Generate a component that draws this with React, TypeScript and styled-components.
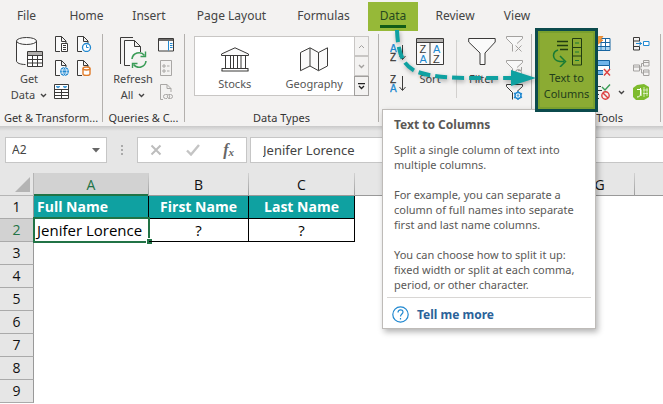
import React from "react";
import styled, { createGlobalStyle, css } from "styled-components";

const uiFont = `"Noto Sans", "Open Sans", sans-serif`;
const sheetFont = `"Open Sans", "Noto Sans", sans-serif`;
const ink = "#3b3a39";
const blue = "#2088d0";
const teal = "#0fa1a1";
const green = "#217346";

const Global = createGlobalStyle`
  *, *::before, *::after { box-sizing: border-box; }
  body { margin: 0; background: #fff; overflow: hidden; }
  button, input { font: inherit; color: inherit; }
  svg { display: block; flex: none; }
`;

const Page = styled.div`
  position: relative;
  min-height: 100vh;
  overflow: hidden;
  font: 12px/16px ${uiFont};
  color: #444;
  background: #fff;
`;

/* ---------- Ribbon ---------- */

const Ribbon = styled.header`
  background: #f3f2f1;
  padding-top: 2px;
`;

const Tabs = styled.nav`
  display: flex;
  margin-bottom: 3px;
`;

const Tab = styled.button<{ $w: number; $active?: boolean }>`
  flex: none;
  width: ${(p) => p.$w}px;
  height: 29px;
  padding: 0 0 2px;
  border: 0;
  background: none;
  white-space: nowrap;
  ${(p) =>
    p.$active &&
    css`
      margin-left: 6px;
      color: #26491f;
      background: #96b938;
      span {
        display: inline-block;
        height: 24px;
        padding-top: 4px;
        border-bottom: 3px solid #135c17;
      }
    `}
`;

const Groups = styled.div`
  display: flex;
  height: 92px;
`;

const Separator = styled.i<{ $short?: boolean }>`
  flex: none;
  width: 1px;
  height: ${(p) => (p.$short ? 58 : 88)}px;
  margin: ${(p) => (p.$short ? "6px 1px 0 3px" : 0)};
  background: ${(p) => (p.$short ? "#d2d0ce" : "#b3b0ad")};
`;

const Group = styled.section<{ $w: number }>`
  flex: none;
  width: ${(p) => p.$w}px;
  display: flex;
  flex-direction: column;
`;

const Tools = styled.div<{ $pad: number }>`
  display: flex;
  height: 76px;
  padding-left: ${(p) => p.$pad}px;
`;

const GroupLabel = styled.h2`
  margin: 0;
  font-size: 11px;
  font-weight: 400;
  line-height: 16px;
  text-align: center;
  white-space: nowrap;
  color: #333;
`;

const BigButton = styled.button<{ $w: number }>`
  flex: none;
  width: ${(p) => p.$w}px;
  display: flex;
  flex-direction: column;
  align-items: center;
  padding: 3px 0 0;
  border: 0;
  background: none;
  font-size: 11px;
  white-space: nowrap;
  svg.art {
    margin-bottom: 3px;
  }
`;

const WithChevron = styled.span`
  display: flex;
  align-items: center;
  gap: 5px;
`;

const IconGrid = styled.div<{ $cols?: number; $gap?: number; $left?: number }>`
  display: grid;
  grid-template-columns: repeat(${(p) => p.$cols || 1}, max-content);
  align-content: start;
  gap: 8px ${(p) => p.$gap || 0}px;
  padding-top: 2px;
  margin-left: ${(p) => p.$left || 0}px;
`;

const IconButton = styled.button`
  display: flex;
  align-items: center;
  gap: 6px;
  height: 16px;
  padding: 0;
  border: 0;
  background: none;
`;

const SortColumn = styled.div`
  display: flex;
  flex-direction: column;
  gap: 15px;
  width: 17px;
  padding-top: 11px;
`;

const Gallery = styled.div`
  display: flex;
  width: 175px;
  height: 60px;
  margin-top: 2px;
  border: 1px solid #c8c6c4;
  background: #fff;
`;

const GalleryItem = styled.button`
  flex: 1;
  display: flex;
  flex-direction: column;
  align-items: center;
  justify-content: flex-end;
  gap: 4px;
  padding: 0 0 3px;
  border: 0;
  background: none;
  font-size: 11px;
  color: #555;
`;

const GalleryScroll = styled.div`
  display: flex;
  flex-direction: column;
  width: 15px;
  margin: -1px -1px -1px 0;
`;

const ScrollButton = styled.button<{ $strong?: boolean }>`
  flex: 1;
  display: flex;
  align-items: center;
  justify-content: center;
  padding: 0;
  border: 1px solid ${(p) => (p.$strong ? "#a19f9d" : "#c8c6c4")};
  background: #f3f2f1;
`;

const HighlightButton = styled(BigButton)`
  position: relative;
  z-index: 3;
  height: 84px;
  margin-top: -6px;
  padding-top: 6px;
  border: 3px solid #0b4a4c;
  background: #8bab33;
  box-shadow: inset 0 0 0 2px #79a02e;
  color: #1f3d1b;
`;

/* ---------- Formula bar ---------- */

const FormulaBar = styled.div`
  display: flex;
  height: 47px;
  padding: 11px 0 10px 5px;
  background: linear-gradient(#c9c9c9, #e6e6e6 5px);
`;

const field = css`
  height: 26px;
  border: 1px solid #c6c6c6;
  background: #fff;
`;

const NameBox = styled.label`
  ${field}
  flex: none;
  display: flex;
  align-items: center;
  width: 102px;
  padding: 0 6px;
  input {
    flex: 1;
    min-width: 0;
    padding: 0;
    border: 0;
    outline: 0;
    background: none;
  }
`;

const Dots = styled.span`
  flex: none;
  display: flex;
  justify-content: center;
  align-items: center;
  width: 30px;
`;

const EntryButtons = styled.div`
  ${field}
  flex: none;
  display: flex;
  align-items: center;
  justify-content: space-between;
  width: 110px;
  padding: 0 12px;
  button {
    padding: 0;
    border: 0;
    background: none;
  }
`;

const FunctionButton = styled.button`
  font: italic 700 16px/16px "Liberation Serif", serif;
  color: #666;
  sub {
    font-size: 11px;
    line-height: 0;
    vertical-align: -1px;
  }
`;

const FormulaInput = styled.input`
  ${field}
  flex: 1;
  min-width: 0;
  margin-left: 3px;
  padding: 0 12px;
  border-right: 0;
  outline: 0;
  && {
    font-size: 13px;
  }
`;

/* ---------- Sheet ---------- */

const Sheet = styled.table`
  width: 100%;
  table-layout: fixed;
  border-spacing: 0;
  font: 14px/20px ${sheetFont};
  color: #000;
  th,
  td {
    height: 23px;
    padding: 0;
    white-space: nowrap;
    text-align: center;
    font-weight: 400;
  }
`;

const Col = styled.col<{ $w?: number }>`
  width: ${(p) => (p.$w ? p.$w + "px" : "auto")};
`;

const ColHead = styled.th<{ $on?: boolean }>`
  color: ${(p) => (p.$on ? green : "#111")};
  background: ${(p) => (p.$on ? "#d2d2d2" : "#e6e6e6")};
  border-right: 1px solid;
  border-image: linear-gradient(#d4d4d4, #999) 1;
  box-shadow: inset 0 ${(p) => (p.$on ? "-2px " + green : "-1px #999")};
  &:last-child {
    border-right: 0;
  }
`;

const Corner = styled.th`
  background: #e6e6e6;
  border-right: 1px solid #b5b5b5;
  border-bottom: 1px solid #b5b5b5;
  svg {
    margin: 1px 2px 0 auto;
  }
`;

const RowHead = styled.th<{ $on?: boolean }>`
  color: ${(p) => (p.$on ? green : "#111")};
  background: ${(p) => (p.$on ? "#d2d2d2" : "#e6e6e6")};
  border-right: 1px solid #999;
  border-bottom: 1px solid #aaa;
`;

const TitleCell = styled.td<{ $left?: boolean }>`
  color: #fff;
  background: ${teal};
  border-right: 1px solid #000;
  border-bottom: 1px solid #000;
  && {
    font-weight: 700;
    ${(p) => p.$left && "text-align: left; padding-left: 3px;"}
  }
`;

const DataCell = styled.td<{ $left?: boolean }>`
  position: relative;
  border-right: 1px solid #000;
  border-bottom: 1px solid #000;
  && {
    font-size: 15px;
    ${(p) => p.$left && "text-align: left; padding-left: 3px;"}
  }
`;

const Selection = styled.span`
  position: absolute;
  inset: -2px -2px -2px -1px;
  border: 2px solid ${green};
  &::after {
    content: "";
    position: absolute;
    right: -4px;
    bottom: -3px;
    width: 6px;
    height: 6px;
    border: solid #fff;
    border-width: 1px 0 0 1px;
    background: ${green};
  }
`;

/* ---------- Tooltip and pointer ---------- */

const Tooltip = styled.aside`
  position: absolute;
  z-index: 2;
  left: 382px;
  top: 109px;
  width: 214px;
  padding: 7px 4px 0;
  border: 1px solid #bebbb8;
  background: #fff;
  box-shadow: 2px 3px 6px rgba(0, 0, 0, 0.3);
  color: #5a5856;
  font-size: 11px;
  line-height: 15px;
  h3 {
    margin: 0 7px 10px;
    font-size: 12px;
    line-height: 15px;
  }
  p {
    margin: 0 0 15px 7px;
    white-space: nowrap;
  }
  p:last-of-type {
    margin-bottom: 5px;
  }
`;

const More = styled.a`
  display: flex;
  align-items: center;
  gap: 8px;
  padding: 8px 5px 5px;
  border-top: 1px solid #d8d6d4;
  color: #2b6299;
  font-size: 12px;
  font-weight: 700;
  text-decoration: none;
`;

const Pointer = styled.svg`
  position: absolute;
  z-index: 4;
  left: 380px;
  top: 22px;
  pointer-events: none;
  filter: drop-shadow(1px 2px 2px rgba(0, 0, 0, 0.3));
`;

/* ---------- Icons ---------- */

type ArtProps = { w?: number; h?: number; children: React.ReactNode; art?: boolean; c?: string };

const Art = ({ w = 16, h = 16, children, art, c = ink }: ArtProps) => (
  <svg className={art ? "art" : undefined} width={w} height={h} viewBox={`0 0 ${w} ${h}`} fill="none" stroke={c} aria-hidden="true">
    {children}
  </svg>
);

const Chevron = ({ c = "#444" }: { c?: string }) => (
  <Art w={7} h={5} c={c}><path d="M1 1l2.500 2.500L6 1" strokeWidth="1.400" /></Art>
);

const Doc = () => (
  <path d="M6 15.500H1.500V.5H7.500L12 5v2M7.500.5V5.500H12" fill="#fafafa" />
);

const GetDataIcon = () => (
  <Art w={28} h={31} art>
    <path d="M1 4v20c0 2 4 4 10 4l11-8V4" fill="#fafafa" stroke="none" />
    <path d="M1.500 4v20c0 2 4 3.500 9 3.500M21.500 4v10" />
    <ellipse cx="11.500" cy="4" rx="10" ry="3.500" fill="#fafafa" />
    <path d="M12.500 14.500h15v15h-15z" fill="#fff" />
    <path d="M13 15h14v3H13z" fill="#b1afad" stroke="none" />
    <path d="M12.500 18.500h15M12.500 22.500h15M12.500 26h15M17.500 18v11M22.500 18v11" />
  </Art>
);

const RefreshIcon = () => (
  <Art w={28} h={31} art>
    <path d="M1.500 27V.5H14" />
    <path d="M11 28.500H5.500V3.500H15.500L21.500 9.500V15M15.500 3.500V9.500h6" fill="#fafafa" />
    <circle cx="20" cy="23" r="8" fill="#f3f2f1" stroke="none" />
    <path d="M13 22a7 7 0 0 1 12.500-3.500M27 24a7 7 0 0 1-12.500 3.500" stroke="#3a9c57" strokeWidth="1.600" />
    <path d="M26.500 14.500v5h-5M13.500 31v-4.500h5" stroke="#3a9c57" strokeWidth="1.400" />
  </Art>
);

const StocksIcon = () => (
  <Art w={28} h={25}>
    <path d="M.5 8.500V7L14 .8 27.500 7v1.500zM1 21.500h26M.5 24h27M1 21v3M27 21v3" fill="#fafafa" />
    <path d="M4.500 9v12M9.500 9v12M12.500 9v12M16.500 9v12M20 9v12M24.500 9v12" />
  </Art>
);

const GeographyIcon = () => (
  <Art w={28} h={25}>
    <path d="M.5 5.500L10 .8l8.500 4.700L27.500.8V19l-9 4.700L10 19 .5 23.700zM10 1v18M18.500 5.500v18" fill="#fafafa" />
  </Art>
);

const SortPair = ({ top, bottom }: { top: string; bottom: string }) => (
  <Art w={17} h={18}>
    <g strokeWidth=".3" fontFamily="Liberation Sans, sans-serif" fontSize="10">
      {[top, bottom].map((letter, i) => {
        const tone = letter === "A" ? blue : ink;
        return <text key={letter} x="0" y={i ? 17 : 8} fill={tone} stroke={tone}>{letter}</text>;
      })}
    </g>
    <path d="M12.500 1v14M9.500 12l3 3.500 3-3.500" />
  </Art>
);

const SortIcon = () => (
  <Art w={28} h={31} art>
    <path d="M.5 1.500h27v26H.5z" fill="#fafafa" />
    <path d="M1 2h26v3H1z" fill="#b1afad" stroke="none" />
    <path d="M.5 5.500h27M14 5.500v22" />
    <g stroke="none" fontFamily="Liberation Sans, sans-serif" fontSize="11">
      <text x="3.500" y="15.500" fill={ink}>Z</text>
      <text x="3.500" y="25.500" fill={blue}>A</text>
      <text x="17" y="15.500" fill={blue}>A</text>
      <text x="17" y="25.500" fill={ink}>Z</text>
    </g>
  </Art>
);

const FilterIcon = () => (
  <Art w={28} h={31} art>
    <path d="M.7 1.500h26.500V5L17 16v11.500h-5V16L.7 5z" fill="#fafafa" />
  </Art>
);

const SmallFilter = ({ kind }: { kind: "clear" | "again" | "adv" }) => (
  <Art w={17} c={kind === "adv" ? ink : "#a3a19f"}>
    <path d="M6.500 15.500V8.500L.5 2.500V.5h16v2L11 7.500" fill="#f8f8f8" />
    {kind === "clear" && <path d="M9.500 9.500l6 6M15.500 9.500l-6 6" />}
    {kind === "again" && <path d="M9.500 12a3 3 0 1 1 3 3.500M15.500 7v3.500H12" />}
    {kind === "adv" && (
      <g stroke={blue} strokeWidth="1.500">
        <circle cx="12" cy="11.500" r="3" fill="#fff" />
        <path d="M12 7v2M12 14v2M8 9.200l1.800 1M14.200 12.700l1.800 1M8 13.800l1.800-1M14.200 10.300l1.800-1" />
        <circle cx="12" cy="11.500" r=".8" strokeWidth="1" />
      </g>
    )}
  </Art>
);

const TextToColumnsIcon = () => (
  <Art w={30} h={30} art c="#203c12">
    <path d="M5 4.500h11M5 8.500h11M8 12.500h8" strokeWidth="1.300" />
    <path d="M6 13c-6 2-6.500 10 2 11.500h4M8 19l5.500 5.500L8 30" stroke="#177a35" strokeWidth="1.500" />
    <path d="M20.500 1.500h9v26.500h-9zM20.500 10.500h9M20.500 19h9" />
    <path d="M23 6h4M23 15h4M23 23.500h4" stroke="#177a35" />
  </Art>
);

const IconDocs = {
  text: (
    <Art>
      <Doc />
      <path d="M7.500 7.500h6v8h-6zM9 9.500h3M9 11.500h3M9 13.500h3" fill="#fff" />
    </Art>
  ),
  recent: (
    <Art>
      <Doc />
      <circle cx="10.500" cy="11.500" r="4" fill="#fff" stroke={blue} strokeWidth="1.300" />
      <path d="M10.500 9v2.500h2" stroke={blue} />
    </Art>
  ),
  web: (
    <Art>
      <Doc />
      <circle cx="10.500" cy="11.500" r="4" fill={blue} stroke={blue} />
      <path d="M6.500 10h8M6.500 13h8M10.500 7.500c-3 2-3 6 0 8M10.500 7.500c3 2 3 6 0 8" stroke="#fff" strokeWidth=".8" />
    </Art>
  ),
  db: (
    <Art>
      <Doc />
      <path d="M7 8.500v5.500c0 2 7 2 7 0V8.500" fill="#fff" stroke="#e07b28" strokeWidth="1.400" />
      <ellipse cx="10.500" cy="8.500" rx="3.500" ry="1.500" fill="#fff" stroke="#e07b28" strokeWidth="1.400" />
    </Art>
  ),
  table: (
    <Art>
      <path d="M.5.5h14v14H.5zM.5 5.500h14M.5 8.500h14M.5 11.500h14M7.500 5.500v9" fill="#fff" />
      <path d="M2 2.500h4l-2 1.500zM9 2.500h4l-2 1.500z" fill={blue} stroke={blue} strokeWidth=".6" />
    </Art>
  ),
  pane: (
    <Art w={17}>
      <path d="M.5 2.500h15v12.500H.5z" fill="#fafafa" />
      <path d="M.5 4h15" strokeWidth="1.500" />
      <path d="M10.500 5v9.500M12 7.500h2.500M12 9.500h2.500M12 11.500h2.500" stroke={blue} />
    </Art>
  ),
  props: (
    <Art w={17} c="#a9a7a5">
      <path d="M2.500.5h11v15h-11zM5 5h2v2H5zM5 10h2v2H5zM9 6h2.500M9 11h2.500" />
    </Art>
  ),
  links: (
    <Art w={17} c="#a9a7a5">
      <path d="M5 15.500H2.500V.5H9l4 4V8M9 .5v4h4" />
      <path d="M9 14.500H7.500a2 2 0 0 1 0-4h2a2 2 0 0 1 1.500 3.500M11 10.500h1.500a2 2 0 0 1 0 4h-1.500A2 2 0 0 1 10 11" />
    </Art>
  ),
  flash: (
    <Art w={17}>
      <path d="M1 2.500h14v12H1z" fill="#fff" stroke="#1764a0" />
      <path d="M1 6.500h14M1 10.500h14M6 2.500v12M10.500 2.500v12" stroke="#1764a0" />
      <path d="M1.500 11h13v3h-13z" fill="#5aa9e0" stroke="none" opacity=".5" />
      <path d="M4 0h4L5.500 4H8L1 10l2-5H.5z" fill="#f59a3c" stroke="#e07b28" strokeWidth=".7" />
    </Art>
  ),
  dup: (
    <Art w={17}>
      <path d="M1 .5h13.500v5H1zM1 10.500h8v4H1z" fill="#71b5ea" stroke="#1764a0" />
      <path d="M1 5.500h13.500v5H1z" fill="#fff" stroke="#1764a0" />
      <path d="M8 9h9v7H8z" fill="#f3f2f1" stroke="none" />
      <path d="M9 9l6 6.500M15 9l-6 6.500" stroke="#dc3f3f" strokeWidth="1.400" />
    </Art>
  ),
  valid: (
    <Art w={17}>
      <path d="M0 2.500h6M0 6.500h7M0 10.500h4M0 14.500h4" />
      <path d="M7 3l3 3 5-5.500" stroke="#3a9c57" strokeWidth="1.400" />
      <circle cx="10.500" cy="11.500" r="3.700" stroke="#dc3f3f" strokeWidth="1.400" />
      <path d="M8 9l5 5" stroke="#dc3f3f" strokeWidth="1.400" />
    </Art>
  ),
  merge: (
    <Art w={17}>
      <path d="M.5 1.500h6v3.500h-6zM.5 10.500h6v3.500h-6zM.5 5v6" />
      <path d="M10.500 5.500h5.500v4h-5.500z" fill="#fff" stroke={blue} />
      <path d="M3 7.500h6M6 5.500l2.500 2L6 9.500" stroke={blue} />
    </Art>
  ),
  relations: (
    <Art w={17} c="#a3a19f">
      <path d="M.5 5h6v6h-6zM.5 7h6M10.500.5H16v5.500h-5.500zM10.500 2.500H16M10.500 10H16v5.500h-5.500zM10.500 12H16M6.500 7H8.500V3.500h2M6.500 9H8.500v4h2" />
    </Art>
  ),
  model: (
    <Art w={17}>
      <path d="M0 4l4-3 7-1 5 3v10l-5 3H3l-3-3z" fill="#7dbb2d" stroke="none" />
      <path d="M4 5.500h4V12M7.500 4v6c0 2-1.500 3-3.500 3" stroke="#fff" />
      <path d="M11 3v10M14 4v8M10 6h5M10 9.500h5" stroke="#e6f4d2" strokeWidth=".8" />
    </Art>
  ),
};

type DocKey = keyof typeof IconDocs;

const Tool = ({ icon, label, drop }: { icon: DocKey; label: string; drop?: boolean }) => (
  <IconButton aria-label={label}>
    {IconDocs[icon]}
    {drop && <Chevron />}
  </IconButton>
);

/* ---------- Page ---------- */

const tabs: [string, number][] = [
  ["File", 53],
  ["Home", 67],
  ["Insert", 58],
  ["Page Layout", 107],
  ["Formulas", 77],
  ["Data", 50],
  ["Review", 74],
  ["View", 50],
];

const columns = ["A", "B", "C", "", "", "", "G", ""];
const emptyRows = [3, 4, 5, 6, 7, 8, 9];

export default function App() {
  return (
    <Page>
      <Global />
      <Ribbon>
        <Tabs aria-label="Ribbon tabs">
          {tabs.map(([name, w]) => (
            <Tab key={name} $w={w} $active={name === "Data"}>
              <span>{name}</span>
            </Tab>
          ))}
        </Tabs>
        <Groups>
          <Group $w={102}>
            <Tools $pad={6}>
              <BigButton $w={46}>
                <GetDataIcon />
                <span>Get</span>
                <WithChevron>Data <Chevron /></WithChevron>
              </BigButton>
              <IconGrid $cols={2} $gap={6} $left={2}>
                <Tool icon="text" label="From Text/CSV" />
                <Tool icon="recent" label="Recent Sources" />
                <Tool icon="web" label="From Web" />
                <Tool icon="db" label="Existing Connections" />
                <Tool icon="table" label="From Table/Range" />
              </IconGrid>
            </Tools>
            <GroupLabel>Get &amp; Transform...</GroupLabel>
          </Group>
          <Separator />
          <Group $w={81}>
            <Tools $pad={7}>
              <BigButton $w={46}>
                <RefreshIcon />
                <span>Refresh</span>
                <WithChevron>All <Chevron /></WithChevron>
              </BigButton>
              <IconGrid $left={2}>
                <Tool icon="pane" label="Queries and Connections" />
                <Tool icon="props" label="Properties" />
                <Tool icon="links" label="Edit Links" />
              </IconGrid>
            </Tools>
            <GroupLabel>Queries &amp; C...</GroupLabel>
          </Group>
          <Separator />
          <Group $w={193}>
            <Tools $pad={9}>
              <Gallery>
                <GalleryItem><StocksIcon />Stocks</GalleryItem>
                <GalleryItem><GeographyIcon />Geography</GalleryItem>
                <GalleryScroll>
                  <ScrollButton aria-label="Previous row">
                    <Art w={7} h={5} c="#a3a19f"><path d="M1 4l2.500-2.500L6 4" /></Art>
                  </ScrollButton>
                  <ScrollButton aria-label="Next row"><Chevron c="#a3a19f" /></ScrollButton>
                  <ScrollButton $strong aria-label="More data types">
                    <Art w={7} h={7} c="#222"><path d="M0 .5h7M1 3l2.500 2.500L6 3" strokeWidth="1.300" /></Art>
                  </ScrollButton>
                </GalleryScroll>
              </Gallery>
            </Tools>
            <GroupLabel>Data Types</GroupLabel>
          </Group>
          <Separator />
          <Group $w={152} aria-label="Sort and Filter">
            <Tools $pad={11}>
              <SortColumn>
                <IconButton aria-label="Sort A to Z"><SortPair top="A" bottom="Z" /></IconButton>
                <IconButton aria-label="Sort Z to A"><SortPair top="Z" bottom="A" /></IconButton>
              </SortColumn>
              <BigButton $w={46}><SortIcon /><span>Sort</span></BigButton>
              <Separator $short />
              <BigButton $w={48}><FilterIcon /><span>Filter</span></BigButton>
              <IconGrid>
                <IconButton aria-label="Clear"><SmallFilter kind="clear" /></IconButton>
                <IconButton aria-label="Reapply"><SmallFilter kind="again" /></IconButton>
                <IconButton aria-label="Advanced"><SmallFilter kind="adv" /></IconButton>
              </IconGrid>
            </Tools>
          </Group>
          <Separator />
          <Group $w={128}>
            <Tools $pad={3}>
              <HighlightButton $w={63}>
                <TextToColumnsIcon />
                <span>Text to</span>
                <span>Columns</span>
              </HighlightButton>
              <IconGrid $cols={2} $gap={8} $left={-3}>
                <Tool icon="flash" label="Flash Fill" />
                <Tool icon="merge" label="Consolidate" />
                <Tool icon="dup" label="Remove Duplicates" />
                <Tool icon="relations" label="Relationships" />
                <Tool icon="valid" label="Data Validation" drop />
                <Tool icon="model" label="Manage Data Model" />
              </IconGrid>
            </Tools>
            <GroupLabel>Data Tools</GroupLabel>
          </Group>
          <Separator />
        </Groups>
      </Ribbon>

      <FormulaBar>
        <NameBox>
          <input aria-label="Name box" defaultValue="A2" />
          <Art w={8} h={5}><path d="M0 0h8L4 4.500z" fill="#666" stroke="none" /></Art>
        </NameBox>
        <Dots>
          <Art w={2} h={10}><path d="M0 0h2v2H0zM0 4h2v2H0zM0 8h2v2H0z" fill="#aaa" stroke="none" /></Art>
        </Dots>
        <EntryButtons>
          <button aria-label="Cancel">
            <Art w={12} h={12} c="#bdbdbd"><path d="M1.500 1.500l9 9M10.500 1.500l-9 9" strokeWidth="2" /></Art>
          </button>
          <button aria-label="Enter">
            <Art w={14} h={12} c="#c4c4c4"><path d="M1 6.500l4 4L13 1" strokeWidth="2.400" /></Art>
          </button>
          <FunctionButton aria-label="Insert Function">f<sub>x</sub></FunctionButton>
        </EntryButtons>
        <FormulaInput aria-label="Formula" defaultValue="Jenifer Lorence" />
      </FormulaBar>

      <Sheet>
        <colgroup>
          {[34, 115, 100, 106, 70, 70, 70, 70, 0].map((w, i) => (
            <Col key={i} $w={w} />
          ))}
        </colgroup>
        <thead>
          <tr>
            <Corner aria-label="Select all">
              <Art w={16} h={15}><path d="M15 0v15H0z" fill="#b4b4b4" stroke="none" /></Art>
            </Corner>
            {columns.map((c, i) => (
              <ColHead key={i} $on={c === "A"}>{c}</ColHead>
            ))}
          </tr>
        </thead>
        <tbody>
          <tr>
            <RowHead>1</RowHead>
            <TitleCell $left>Full Name</TitleCell>
            <TitleCell>First Name</TitleCell>
            <TitleCell>Last Name</TitleCell>
          </tr>
          <tr>
            <RowHead $on>2</RowHead>
            <DataCell $left>Jenifer Lorence<Selection /></DataCell>
            <DataCell>?</DataCell>
            <DataCell>?</DataCell>
          </tr>
          {emptyRows.map((n) => (
            <tr key={n}><RowHead>{n}</RowHead></tr>
          ))}
        </tbody>
      </Sheet>

      <Tooltip role="tooltip">
        <h3>Text to Columns</h3>
        <p>Split a single column of text into<br />multiple columns.</p>
        <p>For example, you can separate a<br />column of full names into separate<br />first and last name columns.</p>
        <p>You can choose how to split it up:<br />fixed width or split at each comma,<br />period, or other character.</p>
        <More href="#help">
          <Art w={17} h={17} c={blue}>
            <circle cx="8.500" cy="8.500" r="7.700" strokeWidth="1.200" />
            <path d="M6 6.500c0-3.500 5-3.500 5-.5 0 2-2.500 2-2.500 4.500M8.500 12v1.500" strokeWidth="1.200" />
          </Art>
          Tell me more
        </More>
      </Tooltip>

      <Pointer width="160" height="72" viewBox="0 0 160 72" fill="none" aria-hidden="true">
        <path d="M17 8C18 34 24 43 35 49C51 55 70 56 90 56H132" stroke={teal} strokeWidth="4" strokeDasharray="12 5" />
        <path d="M131 48l25 8-25 8z" fill={teal} />
      </Pointer>
    </Page>
  );
}
